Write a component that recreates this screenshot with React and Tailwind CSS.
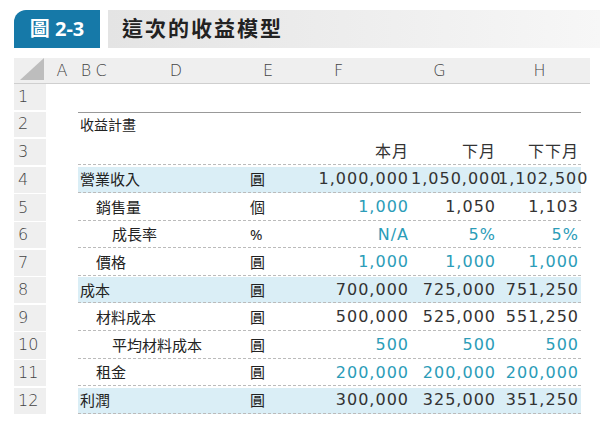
export default function App() {
  const teal = "text-[#2b9cb8]";
  const rows = [
    { n: 1 },
    { n: 2, label: "收益計畫", ind: 0, top: true },
    { n: 3, f: "本月", g: "下月", h: "下下月", plain: true },
    { n: 4, label: "營業收入", ind: 0, u: "圓", f: "1,000,000", g: "1,050,000", h: "1,102,500", hl: true },
    { n: 5, label: "銷售量", ind: 1, u: "個", f: "1,000", g: "1,050", h: "1,103", tf: true },
    { n: 6, label: "成長率", ind: 2, u: "%", f: "N/A", g: "5%", h: "5%", tf: true, tg: true, th: true },
    { n: 7, label: "價格", ind: 1, u: "圓", f: "1,000", g: "1,000", h: "1,000", tf: true, tg: true, th: true },
    { n: 8, label: "成本", ind: 0, u: "圓", f: "700,000", g: "725,000", h: "751,250", hl: true },
    { n: 9, label: "材料成本", ind: 1, u: "圓", f: "500,000", g: "525,000", h: "551,250" },
    { n: 10, label: "平均材料成本", ind: 2, u: "圓", f: "500", g: "500", h: "500", tf: true, tg: true, th: true },
    { n: 11, label: "租金", ind: 1, u: "圓", f: "200,000", g: "200,000", h: "200,000", tf: true, tg: true, th: true },
    { n: 12, label: "利潤", ind: 0, u: "圓", f: "300,000", g: "325,000", h: "351,250", hl: true },
  ];
  const cols = "grid-cols-[32px_32px_172px_36px_125px_87px_83px]";
  const num = { fontFamily: '"DejaVu Sans", "Noto Sans CJK TC", sans-serif', letterSpacing: "1px" };
  return (
    <div className="w-[600px] h-[425px] bg-white overflow-hidden" style={{ fontFamily: '"Noto Sans", "Noto Sans CJK TC", sans-serif' }}>
      <div className="flex items-stretch h-[38px] mt-[10px] ml-[14px]">
        <div className="w-[86px] bg-[#1679a8] rounded-tl-[12px] text-white text-[20px] font-bold flex items-center justify-center">圖 2-3</div>
        <div className="ml-[8px] flex-1 bg-gradient-to-r from-[#e4e4e4] to-[#f7f7f7] flex items-center pl-[14px] text-[21px] font-bold text-[#222] tracking-[2px]">這次的收益模型</div>
      </div>
      <div className="ml-[14px] mt-[10px] w-[576px] text-[15px] text-[#222]">
        <div className={`grid ${cols} h-[26px] bg-[#efefef] text-[#444] text-[16px] items-center border-b border-[#cfcfcf]`} style={{ fontFamily: '"DejaVu Sans", sans-serif', fontWeight: 200 }}>
          <div className="h-full relative"><div className="absolute right-[2px] bottom-[3px] w-0 h-0 border-l-[24px] border-l-transparent border-b-[22px] border-b-[#bdbdbd]" /></div>
          <div className="text-center">A</div>
          <div className="flex"><span className="w-[16px] text-center">B</span><span className="w-[14px] text-center">C</span><span className="flex-1 text-center pr-[6px]">D</span></div>
          <div className="text-center">E</div>
          <div className="text-center pr-[20px]">F</div>
          <div className="text-center pr-[30px]">G</div>
          <div className="text-center">H</div>
        </div>
        {rows.map((r) => (
          <div key={r.n} className={`grid ${cols} h-[27.6px] items-center`}>
            <div className="bg-[#efefef] h-full flex items-center pl-[4px] text-[#444] text-[16px]" style={{ fontFamily: '"DejaVu Sans", sans-serif', fontWeight: 200 }}>{r.n}</div>
            <div />
            <div className={`col-span-5 h-full grid grid-cols-[172px_36px_125px_87px_83px] items-center ${r.n >= 3 ? "border-b border-dashed border-[#bbb]" : ""} ${r.top ? "border-t border-[#999]" : ""} ${r.hl ? "bg-[#daeef6]" : ""}`}>
              <div style={{ paddingLeft: 2 + r.ind * 16 }} className={r.top ? "text-[14px]" : ""}>{r.label}</div>
              <div>{r.u}</div>
              <div style={num} className={`text-right pr-[2px] text-[16px] ${r.tf ? teal : "text-[#333]"}`}>{r.f}</div>
              <div style={num} className={`text-right pr-[2px] text-[16px] ${r.tg ? teal : "text-[#333]"}`}>{r.g}</div>
              <div style={num} className={`text-right pr-[2px] text-[16px] ${r.th ? teal : "text-[#333]"}`}>{r.h}</div>
            </div>
            <div />
          </div>
        ))}
      </div>
    </div>
  );
}
